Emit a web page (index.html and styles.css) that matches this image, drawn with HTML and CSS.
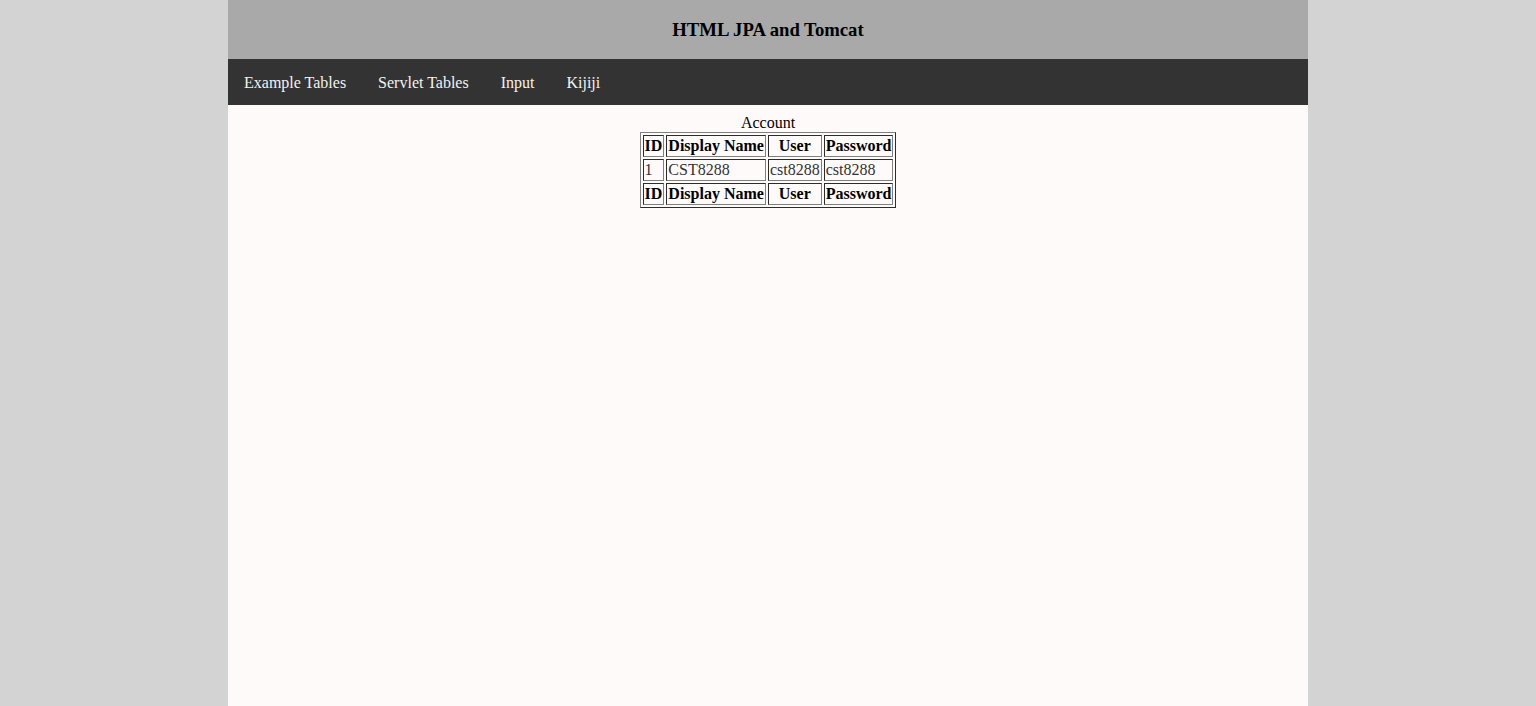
FILE: index.html
```html
<!DOCTYPE html>
<html>
<head>
<meta charset="utf-8">
<title>HTML JPA and Tomcat</title>
<link rel="stylesheet" href="styles.css">
</head>
<body>
<div class="page">
  <header class="header"><h3 class="title">HTML JPA and Tomcat</h3></header>
  <nav class="topnav">
    <a href="#">Example Tables</a>
    <a href="#">Servlet Tables</a>
    <a href="#">Input</a>
    <a href="#">Kijiji</a>
  </nav>
  <main class="content">
    <table class="grid" border="1">
      <caption>Account</caption>
      <tr><th>ID</th><th>Display Name</th><th>User</th><th>Password</th></tr>
      <tr><td>1</td><td>CST8288</td><td>cst8288</td><td>cst8288</td></tr>
      <tr><th>ID</th><th>Display Name</th><th>User</th><th>Password</th></tr>
    </table>
  </main>
</div>
</body>
</html>
```
FILE: styles.css
```css
html, body {
  margin: 0;
  padding: 0;
  height: 100%;
}
body {
  background: #d3d3d3;
  font-family: "Liberation Serif", "Times New Roman", serif;
  font-size: 16px;
}
.page {
  width: 1080px;
  margin: 0 auto;
  min-height: 100%;
  background: #fffafa;
  display: flex;
  flex-direction: column;
}
.header {
  background: #a9a9a9;
  height: 59px;
  display: flex;
  align-items: center;
  justify-content: center;
}
.title {
  margin: 0;
  font-size: 18.72px;
  font-weight: bold;
  color: #000;
}
.topnav {
  background: #333;
  display: flex;
  height: 46px;
}
.topnav a {
  color: #f2f2f2;
  text-decoration: none;
  padding: 15px 16px 13px;
  font-size: 16px;
  line-height: 18px;
}
.content {
  flex: 1;
  padding-top: 9px;
}
.grid {
  margin: 0 auto;
  color: #333;
}
.grid caption {
  color: #000;
}
.grid th {
  color: #000;
}
```
